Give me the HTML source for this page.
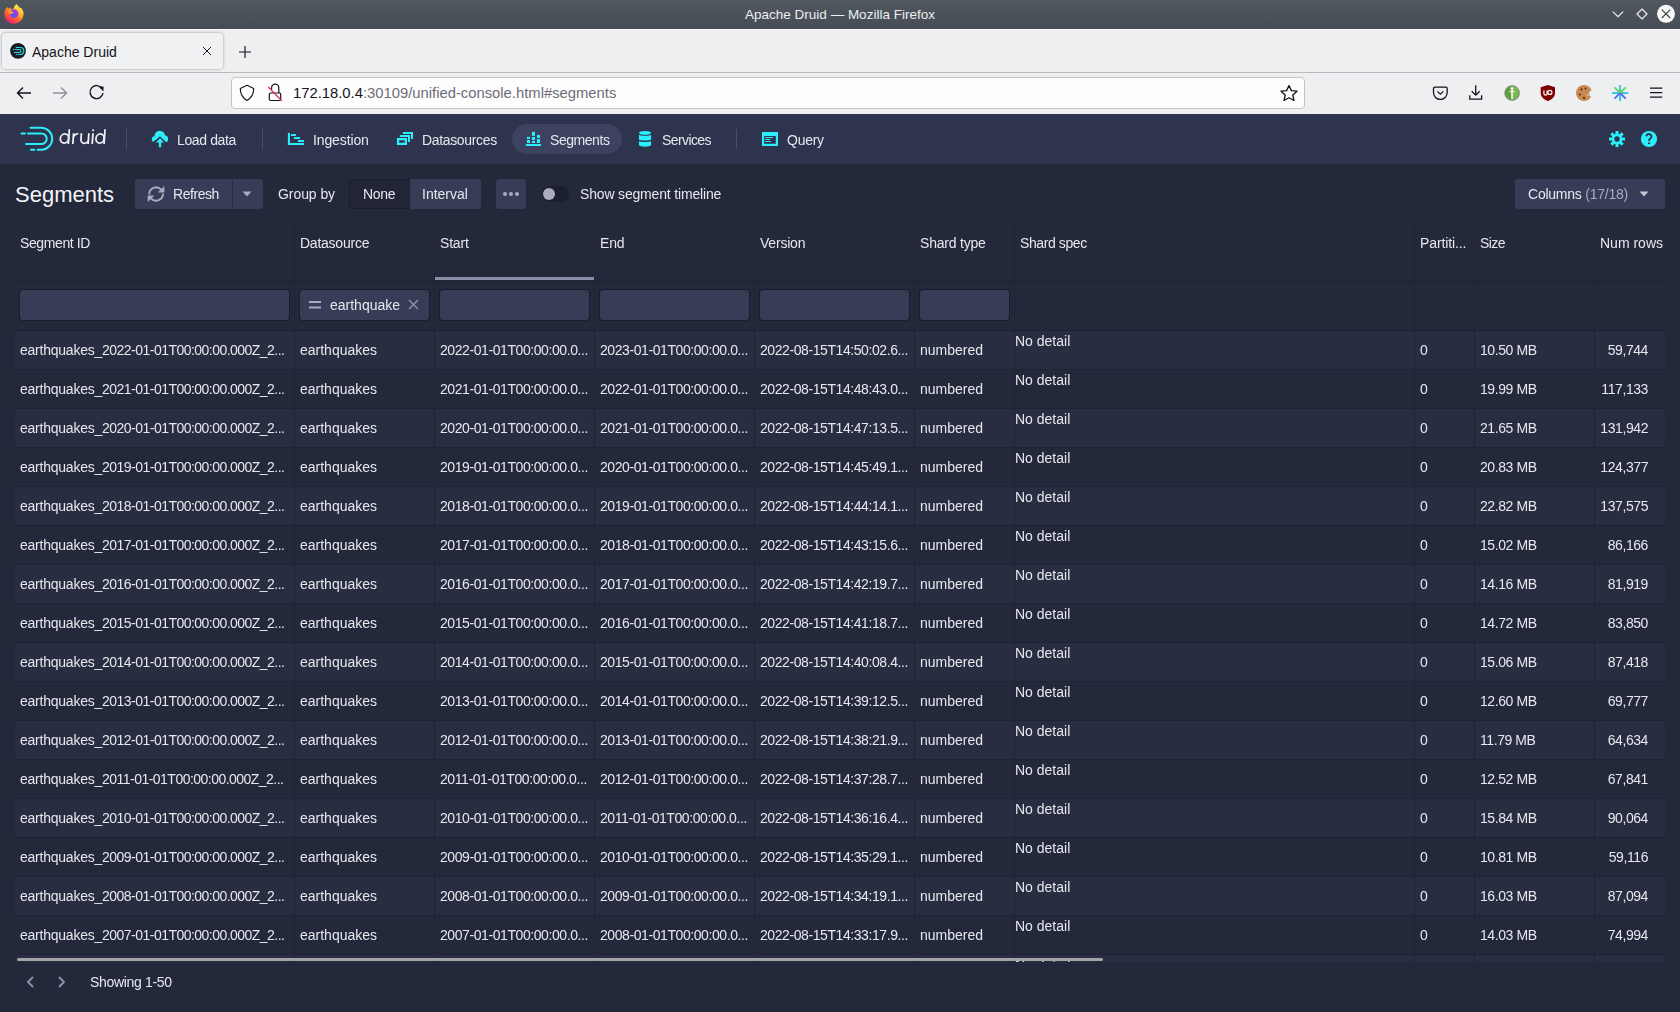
<!DOCTYPE html><html><head><meta charset="utf-8"><title>Apache Druid</title><style>
*{box-sizing:border-box}
html,body{margin:0;padding:0;width:1680px;height:1012px;overflow:hidden;background:#24283b;font-family:"Liberation Sans",sans-serif;}
.a{position:absolute;white-space:nowrap}
.cell,.nt,.t14{will-change:transform}
#title{position:absolute;left:0;top:0;width:1680px;height:29px;background:linear-gradient(#50575f,#474d54);}
#tabs{position:absolute;left:0;top:29px;width:1680px;height:44px;background:#eeeff1;border-top:1px solid #f7f7f8;border-bottom:1px solid #b9b9bd}
#tb{position:absolute;left:0;top:73px;width:1680px;height:41px;background:#eeeff1}
#nav{position:absolute;left:0;top:114px;width:1680px;height:50px;background:#2f344e}
.nt{position:absolute;top:131px;font-size:14px;color:#e6e8ee;line-height:18px}
.sep{position:absolute;top:129px;width:1px;height:20px;background:#4a4f69}
.btn{position:absolute;top:179px;height:30px;background:#383d57;border-radius:3px}
.t14{font-size:14px;color:#e6e8ee;line-height:18px}
.cs{position:absolute;top:224px;width:1px;height:738px;background:#202336}
.rs{position:absolute;left:15px;width:1650px;height:1px;background:#202336}
.cell{position:absolute;font-size:14px;color:#e6e8ee;line-height:18px;white-space:nowrap}
.num{letter-spacing:-0.42px}
.inp{position:absolute;top:290px;height:30px;background:#383d57;border-radius:3px;box-shadow:0 0 0 1px rgba(20,22,36,0.6)}
</style></head><body>
<div id="title"></div>
<div class="a" style="left:0;top:7px;width:1680px;text-align:center;font-size:13.5px;line-height:16px;color:#eceef0">Apache Druid — Mozilla Firefox</div>
<svg class="a" style="left:0;top:0" width="30" height="28" viewBox="0 0 30 28">
<defs><linearGradient id="ffg" x1="0.85" y1="0.05" x2="0.25" y2="0.95"><stop offset="0" stop-color="#fff44f"/><stop offset="0.35" stop-color="#ffbd2e"/><stop offset="0.6" stop-color="#ff6d2e"/><stop offset="0.85" stop-color="#ff3a4a"/><stop offset="1" stop-color="#e31587"/></linearGradient>
<radialGradient id="ffp" cx="0.35" cy="0.75" r="0.8"><stop offset="0" stop-color="#5b5be0"/><stop offset="0.6" stop-color="#8f3ef0"/><stop offset="1" stop-color="#b833e1"/></radialGradient></defs>
<path d="M7.3 7.0 L8.6 8.8 L10.4 7.6 L11.2 9.4 L13.7 8.6 L14.2 6.2 L16.5 3.9 L19.5 7.6 L21.6 8.3 A9.65 9.65 0 1 1 7.3 7.0 Z" fill="url(#ffg)"/>
<circle cx="14" cy="13.6" r="4.4" fill="url(#ffp)"/>
<path d="M7 12.2 L10 10 L13.8 12.4 L10.4 14.2 Z" fill="#ff9d1e"/></svg>
<svg class="a" style="left:1600px;top:0" width="80" height="29" viewBox="0 0 80 29">
<path d="M12.8 11.6 L18 16.6 L23.2 11.6" stroke="#f0f0f0" stroke-width="1.2" fill="none"/>
<path d="M42 9 L47 14 L42 19 L37 14 Z" stroke="#f0f0f0" stroke-width="1.2" fill="none"/>
<circle cx="66" cy="13.8" r="9" fill="#f7f7f7"/><path d="M61.8 9.6 L70.2 18 M70.2 9.6 L61.8 18" stroke="#3a3f45" stroke-width="1.1"/></svg>
<div id="tabs"></div>
<div class="a" style="left:2px;top:33px;width:221px;height:36px;background:#f0f1f3;border-radius:4px;box-shadow:0 0 2px 1px rgba(0,0,0,0.18)"></div>
<svg class="a" style="left:6px;top:40px" width="24" height="22" viewBox="6 40 24 22"><circle cx="18" cy="50.8" r="8.5" fill="#fbfbfc"/><circle cx="18" cy="50.8" r="7.9" fill="#1a1b24"/>
<g stroke="#29dbe8" stroke-width="1.2" fill="none" stroke-linecap="round"><path d="M16.2 47.5 H20.3 A3.5 3.5 0 0 1 20.3 54.5 H18.3"/><path d="M15.2 49.5 H19.4 A1.5 1.5 0 0 1 19.4 52.5 H14.2"/></g>
<circle cx="13.4" cy="49.5" r="0.65" fill="#29dbe8"/><circle cx="16.4" cy="54.5" r="0.65" fill="#29dbe8"/></svg>
<div class="a" style="left:32px;top:43px;font-size:14px;line-height:18px;color:#15141a">Apache Druid</div>
<svg class="a" style="left:202px;top:46px" width="10" height="10" viewBox="0 0 10 10"><path d="M1 1 L9 9 M9 1 L1 9" stroke="#15141a" stroke-width="1.0"/></svg>
<svg class="a" style="left:238px;top:45px" width="14" height="14" viewBox="0 0 14 14"><path d="M7 1 V13 M1 7 H13" stroke="#15141a" stroke-width="1.15"/></svg>
<div id="tb"></div>
<svg class="a" style="left:14px;top:84px" width="96" height="18" viewBox="0 0 96 18">
<path d="M17 9 H4 M9 3.5 L3.5 9 L9 14.5" stroke="#15141a" stroke-width="1.4" fill="none"/>
<path d="M39 9 H52 M47 3.5 L52.5 9 L47 14.5" stroke="#8f8f9d" stroke-width="1.4" fill="none"/>
<path d="M88 4.5 A6.5 6.5 0 1 0 89 9" stroke="#15141a" stroke-width="1.4" fill="none"/><path d="M84.5 2.5 L89.5 2.5 L89.5 7.5 Z" fill="#15141a"/>
</svg>
<div class="a" style="left:231px;top:77px;width:1074px;height:32px;background:#fdfdfe;border:1px solid #c3c3c7;border-radius:4px"></div>
<svg class="a" style="left:228px;top:74px" width="60" height="38" viewBox="228 74 60 38">
<path d="M247 85.2 L253.7 88.4 C253.8 94 251.5 97.7 247 100.4 C242.5 97.7 240.2 94 240.3 88.4 Z" stroke="#15141a" stroke-width="1.15" fill="none" stroke-linejoin="round"/>
<path d="M271.6 89.5 V87.8 A3.6 3.6 0 0 1 278.8 87.8 V93" stroke="#15141a" stroke-width="1.2" fill="none"/><rect x="269.3" y="93" width="11.4" height="7.5" rx="1.5" stroke="#15141a" stroke-width="1.2" fill="none"/>
<path d="M268.2 86.9 L281.8 100.9" stroke="#e3164e" stroke-width="1.3"/></svg>
<div class="a" style="left:293px;top:84px;font-size:14.8px;line-height:18px;color:#15141a">172.18.0.4<span style="color:#6d6d78">:30109/unified-console.html#segments</span></div>
<svg class="a" style="left:1279px;top:84px" width="20" height="18" viewBox="0 0 20 18"><path d="M10 1.5 L12.4 6.6 L18 7.2 L13.8 11 L15 16.5 L10 13.7 L5 16.5 L6.2 11 L2 7.2 L7.6 6.6 Z" stroke="#15141a" stroke-width="1.3" fill="none" stroke-linejoin="round"/></svg>
<svg class="a" style="left:1420px;top:78px" width="260" height="30" viewBox="1420 78 260 30">
<path d="M1435 87.2 H1445.8 Q1447.2 87.2 1447.2 88.6 V92.6 A6.85 6.85 0 0 1 1433.5 92.6 V88.6 Q1433.5 87.2 1435 87.2 Z" stroke="#15141a" stroke-width="1.3" fill="none"/><path d="M1437.4 91.4 L1440.35 94.2 L1443.3 91.4" stroke="#15141a" stroke-width="1.3" fill="none"/>
<path d="M1475.7 85.3 V95 M1471.7 91.2 L1475.7 95.2 L1479.7 91.2 M1469.8 95.3 V99.1 H1481.6 V95.3" stroke="#15141a" stroke-width="1.3" fill="none"/>
<circle cx="1512.1" cy="93" r="7.5" fill="#5e9f3c" stroke="#9a9a9a" stroke-width="0.8"/><path d="M1512.1 86.5 A6.5 6.5 0 0 1 1512.1 99.5 Z" fill="#7dba52"/>
<path d="M1512 90.5 V99" stroke="#f6f6f6" stroke-width="1.7"/><circle cx="1512" cy="88.6" r="1.5" fill="#f6f6f6"/><path d="M1509.5 92 L1512 90.8 L1514.5 92" stroke="#f6f6f6" stroke-width="1.1" fill="none"/>
<path d="M1547.85 85 L1555 87.3 V93 C1555 97 1551.6 99.6 1547.85 101 C1544.1 99.6 1540.7 97 1540.7 93 V87.3 Z" fill="#800000"/>
<path d="M1543.9 90.6 V93.6 A1.6 1.6 0 0 0 1547.1 93.6 V90.6" stroke="#fff" stroke-width="1.2" fill="none"/><circle cx="1549.9" cy="92.4" r="2" stroke="#fff" stroke-width="1.2" fill="none"/>
<circle cx="1584" cy="93" r="8" fill="#c98a52"/><circle cx="1592.3" cy="93.6" r="3.2" fill="#eeeff1"/><circle cx="1581.5" cy="89.5" r="1.1" fill="#4b2a12"/><circle cx="1585.5" cy="88.5" r="0.9" fill="#4b2a12"/><circle cx="1579.8" cy="94.5" r="1" fill="#4b2a12"/><circle cx="1584" cy="97.8" r="1.1" fill="#4b2a12"/><circle cx="1587.8" cy="95" r="0.8" fill="#f4e4d4"/>
<path d="M1620.1 85 V101" stroke="#3ac6e6" stroke-width="2"/><path d="M1612 93 H1628.2" stroke="#3ac6e6" stroke-width="2"/>
<path d="M1614.5 87.4 L1620.1 93 M1625.7 87.4 L1620.1 93" stroke="#6fd85a" stroke-width="2"/><path d="M1620.1 93 L1625.7 98.6 M1620.1 93 L1614.5 98.6" stroke="#5b72ee" stroke-width="2"/>
<path d="M1650 88.1 H1662.3 M1650 92.6 H1662.3 M1650 97.1 H1662.3" stroke="#15141a" stroke-width="1.4"/>
</svg>
<div id="nav"></div>
<svg class="a" style="left:15px;top:120px" width="45" height="36" viewBox="15 120 45 36">
<g stroke="#2ceefb" stroke-width="2" fill="none" stroke-linecap="round">
<path d="M30.5 127.8 H41.2 A11 11 0 0 1 41.2 149.8 H37.5"/>
<path d="M28 133.4 H41.4 A5.35 5.35 0 0 1 41.4 144.1 H26"/>
<path d="M21.5 133.4 H25"/><path d="M31 149.7 H34.3"/></g></svg>
<svg class="a" style="left:55px;top:124px" width="56" height="24" viewBox="55 124 56 24">
<g stroke="#f1f2f6" stroke-width="1.75" fill="none" transform="translate(0 144) skewX(-4.2) translate(0 -144)">
<ellipse cx="64.1" cy="138.5" rx="4.15" ry="4.6"/><path d="M68.3 129.2 V144"/>
<path d="M72.8 133.2 V144 M72.8 137.6 Q73.6 133.8 77.6 133.6"/>
<path d="M80.6 133.2 V139.6 A3.75 3.75 0 0 0 88.1 139.6 M88.1 133.2 V144"/>
<path d="M92.2 133.2 V144"/>
<ellipse cx="99.6" cy="138.5" rx="4.05" ry="4.6"/><path d="M104 129.2 V144"/></g>
<circle cx="93.1" cy="130.2" r="1.05" fill="#f1f2f6"/></svg>
<div class="sep" style="left:126px"></div>
<div class="sep" style="left:262px"></div>
<div class="sep" style="left:736px"></div>
<div class="a" style="left:512px;top:124px;width:110px;height:30px;border-radius:15px;background:#3d4261"></div>
<svg class="a" style="left:150px;top:129px" width="20" height="20" viewBox="0 0 20 20">
<defs><clipPath id="cc"><polygon points="0,0 20,0 20,13.4 16.6,13.4 10,7.1 2.4,13.4 0,13.4"/></clipPath></defs>
<g fill="#2ceefb" clip-path="url(#cc)"><circle cx="9.8" cy="7" r="5.3"/><circle cx="4.8" cy="10.3" r="3"/><circle cx="14.3" cy="10" r="3.8"/><rect x="4.8" y="7" width="9.5" height="7"/></g>
<path d="M10 9.3 L5.9 13.6 L14.1 13.6 Z" fill="#2ceefb"/><rect x="8.8" y="12.5" width="2.4" height="5.7" fill="#2ceefb"/></svg>
<svg class="a" style="left:284px;top:128px" width="24" height="22" viewBox="0 0 24 22" fill="#2ceefb">
<rect x="3.9" y="4.9" width="2.1" height="12.1"/><rect x="3.9" y="15" width="16.1" height="2"/><rect x="7" y="6" width="5" height="2" rx="0.6"/><rect x="9.9" y="9" width="6.2" height="2" rx="0.6"/><rect x="13.9" y="12" width="6.1" height="2" rx="0.6"/></svg>
<svg class="a" style="left:393px;top:128px" width="24" height="22" viewBox="0 0 24 22" fill="#2ceefb">
<path fill-rule="evenodd" d="M3.9 9.9 H14 V17 H3.9 Z M6.2 12.3 V14.8 H11.7 V12.3 Z"/><path d="M6.8 7 H17 V13.9 H15 V8.9 H6.8 Z"/><path d="M9.9 3.9 H20 V11 H18 V5.9 H9.9 Z"/></svg>
<svg class="a" style="left:522px;top:128px" width="24" height="22" viewBox="0 0 24 22" fill="#2ceefb">
<rect x="3.9" y="16" width="15.1" height="2"/><rect x="4.9" y="8.9" width="3.1" height="2"/><rect x="4.9" y="12" width="3.1" height="3"/>
<rect x="9.9" y="3.9" width="3.1" height="3.9"/><rect x="9.9" y="9" width="3.1" height="3"/><rect x="9.9" y="12.9" width="3.1" height="2.1"/>
<rect x="14.9" y="7" width="3.1" height="2.9"/><rect x="14.9" y="11" width="3.1" height="4"/></svg>
<svg class="a" style="left:633px;top:126px" width="24" height="24" viewBox="0 0 24 24" fill="#2ceefb">
<ellipse cx="12" cy="6.8" rx="6.1" ry="1.9"/><path d="M5.9 8.8 C7 10.2 17 10.2 18.1 8.8 V13.5 C17 14.9 7 14.9 5.9 13.5 Z"/><path d="M5.9 14.9 C7 16.3 17 16.3 18.1 14.9 V19 C17 21.2 7 21.2 5.9 19 Z"/></svg>
<svg class="a" style="left:757px;top:128px" width="24" height="22" viewBox="0 0 24 22" fill="#2ceefb">
<path fill-rule="evenodd" d="M5 4 H21 V18 H5 Z M7.1 8 V15.8 H18.8 V8 Z"/><rect x="8" y="8.9" width="8.1" height="1.2" rx="0.6"/><rect x="8" y="11" width="5.1" height="1.1" rx="0.55"/><rect x="8" y="12.9" width="6.1" height="1.2" rx="0.6"/></svg>
<div class="nt" style="left:177px;letter-spacing:-0.37px">Load data</div>
<div class="nt" style="left:313px;letter-spacing:-0.12px">Ingestion</div>
<div class="nt" style="left:422px;letter-spacing:-0.34px">Datasources</div>
<div class="nt" style="left:550px;letter-spacing:-0.45px">Segments</div>
<div class="nt" style="left:662px;letter-spacing:-0.6px">Services</div>
<div class="nt" style="left:787px;letter-spacing:-0.25px">Query</div>
<svg class="a" style="left:1604px;top:127px" width="58" height="24" viewBox="1604 127 58 24">
<g fill="#2ceefb" transform="translate(1617 139)">
<rect x="-1.5" y="-8" width="3" height="16"/><rect x="-1.5" y="-8" width="3" height="16" transform="rotate(45)"/><rect x="-1.5" y="-8" width="3" height="16" transform="rotate(90)"/><rect x="-1.5" y="-8" width="3" height="16" transform="rotate(135)"/>
<circle r="5.3"/></g><circle cx="1617" cy="139" r="2.7" fill="#2f344e"/>
<circle cx="1649" cy="139" r="8.1" fill="#2ceefb"/>
<path d="M1646.3 136.4 A2.6 2.4 0 1 1 1650.6 138.3 C1649.6 139 1649 139.6 1649 141" stroke="#2f344e" stroke-width="1.9" fill="none"/><rect x="1648" y="142.4" width="2" height="1.6" fill="#2f344e"/></svg>
<div class="a" style="left:15px;top:182px;font-size:22px;line-height:26px;color:#f3f4f7">Segments</div>
<div class="btn" style="left:135px;width:128px"></div>
<div class="a" style="left:232px;top:179px;width:1px;height:30px;background:#2a2e44"></div>
<svg class="a" style="left:140px;top:180px" width="30" height="28" viewBox="0 0 30 28">
<g stroke="#a9acbb" stroke-width="1.9" fill="none"><path d="M9.3 14.5 A6.8 6.8 0 0 1 21.2 9.6"/><path d="M22.9 13.5 A6.8 6.8 0 0 1 11 18.4"/></g>
<path d="M24.4 5.9 V12.6 H17.7 Z" fill="#a9acbb"/><path d="M7.7 22.1 V15.4 H14.4 Z" fill="#a9acbb"/></svg>
<div class="a t14" style="left:173px;top:185px;letter-spacing:-0.45px">Refresh</div>
<svg class="a" style="left:242px;top:191px" width="10" height="6" viewBox="0 0 10 6"><path d="M0.5 0.5 H9.5 L5 5.5 Z" fill="#a9acbb"/></svg>
<div class="a t14" style="left:278px;top:185px;letter-spacing:-0.07px">Group by</div>
<div class="a" style="left:349px;top:179px;width:132px;height:30px;border-radius:3px;background:#222538;border:1px solid #1b1e2d"></div>
<div class="a" style="left:410px;top:179px;width:71px;height:30px;border-radius:0 3px 3px 0;background:#383d57"></div>
<div class="a t14" style="left:363px;top:185px;letter-spacing:-0.3px">None</div>
<div class="a t14" style="left:422px;top:185px">Interval</div>
<div class="btn" style="left:496px;width:30px"></div>
<svg class="a" style="left:502px;top:191px" width="18" height="6" viewBox="0 0 18 6"><circle cx="3" cy="3" r="2" fill="#a9acbb"/><circle cx="9" cy="3" r="2" fill="#a9acbb"/><circle cx="15" cy="3" r="2" fill="#a9acbb"/></svg>
<div class="a" style="left:542px;top:186px;width:27px;height:16px;border-radius:8px;background:#1c1f2f"></div>
<div class="a" style="left:543px;top:188px;width:12px;height:12px;border-radius:6px;background:#a9acbb"></div>
<div class="a t14" style="left:580px;top:185px;letter-spacing:-0.17px">Show segment timeline</div>
<div class="btn" style="left:1515px;width:150px"></div>
<div class="a t14" style="left:1528px;top:185px;letter-spacing:-0.23px">Columns <span style="color:#a9acbb">(17/18)</span></div>
<svg class="a" style="left:1639px;top:191px" width="10" height="6" viewBox="0 0 10 6"><path d="M0.5 0.5 H9.5 L5 5.5 Z" fill="#c5c7d2"/></svg>
<div class="a" style="left:15px;top:331px;width:1650px;height:38px;background:#292d41"></div>
<div class="a" style="left:15px;top:409px;width:1650px;height:38px;background:#292d41"></div>
<div class="a" style="left:15px;top:487px;width:1650px;height:38px;background:#292d41"></div>
<div class="a" style="left:15px;top:565px;width:1650px;height:38px;background:#292d41"></div>
<div class="a" style="left:15px;top:643px;width:1650px;height:38px;background:#292d41"></div>
<div class="a" style="left:15px;top:721px;width:1650px;height:38px;background:#292d41"></div>
<div class="a" style="left:15px;top:799px;width:1650px;height:38px;background:#292d41"></div>
<div class="a" style="left:15px;top:877px;width:1650px;height:38px;background:#292d41"></div>
<div class="a" style="left:15px;top:955px;width:1650px;height:7px;background:#292d41"></div>
<div class="rs" style="top:280px"></div>
<div class="rs" style="top:330px"></div>
<div class="rs" style="top:369px"></div>
<div class="rs" style="top:408px"></div>
<div class="rs" style="top:447px"></div>
<div class="rs" style="top:486px"></div>
<div class="rs" style="top:525px"></div>
<div class="rs" style="top:564px"></div>
<div class="rs" style="top:603px"></div>
<div class="rs" style="top:642px"></div>
<div class="rs" style="top:681px"></div>
<div class="rs" style="top:720px"></div>
<div class="rs" style="top:759px"></div>
<div class="rs" style="top:798px"></div>
<div class="rs" style="top:837px"></div>
<div class="rs" style="top:876px"></div>
<div class="rs" style="top:915px"></div>
<div class="rs" style="top:954px"></div>
<div class="a" style="left:435px;top:277px;width:159px;height:3px;background:#8a8ea6"></div>
<div class="cs" style="left:294px"></div>
<div class="cs" style="left:434px"></div>
<div class="cs" style="left:594px"></div>
<div class="cs" style="left:754px"></div>
<div class="cs" style="left:914px"></div>
<div class="cs" style="left:1014px"></div>
<div class="cs" style="left:1414px"></div>
<div class="cs" style="left:1474px"></div>
<div class="cs" style="left:1594px"></div>
<div class="cell" style="left:20px;top:234px;letter-spacing:-0.39px">Segment ID</div>
<div class="cell" style="left:300px;top:234px;letter-spacing:-0.24px">Datasource</div>
<div class="cell" style="left:440px;top:234px;letter-spacing:-0.2px">Start</div>
<div class="cell" style="left:600px;top:234px;letter-spacing:-0.2px">End</div>
<div class="cell" style="left:760px;top:234px;letter-spacing:-0.2px">Version</div>
<div class="cell" style="left:920px;top:234px;letter-spacing:-0.2px">Shard type</div>
<div class="cell" style="left:1020px;top:234px;letter-spacing:-0.4px">Shard spec</div>
<div class="cell" style="left:1420px;top:234px;letter-spacing:-0.12px">Partiti...</div>
<div class="cell" style="left:1480px;top:234px;letter-spacing:-0.6px">Size</div>
<div class="cell" style="left:1600px;top:234px;letter-spacing:0px">Num rows</div>
<div class="inp" style="left:20px;width:269px"></div>
<div class="inp" style="left:300px;width:129px"></div>
<div class="inp" style="left:440px;width:149px"></div>
<div class="inp" style="left:600px;width:149px"></div>
<div class="inp" style="left:760px;width:149px"></div>
<div class="inp" style="left:920px;width:89px"></div>
<svg class="a" style="left:309px;top:301px" width="12" height="8" viewBox="0 0 12 8"><path d="M0 1 H12 M0 6.5 H12" stroke="#a9acbb" stroke-width="1.8"/></svg>
<div class="cell" style="left:330px;top:296px">earthquake</div>
<svg class="a" style="left:408px;top:299px" width="11" height="11" viewBox="0 0 11 11"><path d="M1 1 L10 10 M10 1 L1 10" stroke="#8d90a2" stroke-width="1.5"/></svg>
<div class="a" style="left:0;top:331px;width:1665px;height:631px;overflow:hidden">
<div class="cell" style="left:20px;top:10px"><span style="letter-spacing:-0.23px">earthquakes_</span><span style="letter-spacing:-0.53px">2022-01-01T00:00:00.000Z_2...</span></div>
<div class="cell" style="left:300px;top:10px">earthquakes</div>
<div class="cell num" style="left:440px;top:10px">2022-01-01T00:00:00.0...</div>
<div class="cell num" style="left:600px;top:10px">2023-01-01T00:00:00.0...</div>
<div class="cell num" style="left:760px;top:10px">2022-08-15T14:50:02.6...</div>
<div class="cell" style="left:920px;top:10px">numbered</div>
<div class="cell" style="left:1015px;top:1px">No detail</div>
<div class="cell" style="left:1420px;top:10px">0</div>
<div class="cell num" style="left:1480px;top:10px">10.50 MB</div>
<div class="cell num" style="left:1500px;width:148px;text-align:right;top:10px">59,744</div>
<div class="cell" style="left:20px;top:49px"><span style="letter-spacing:-0.23px">earthquakes_</span><span style="letter-spacing:-0.53px">2021-01-01T00:00:00.000Z_2...</span></div>
<div class="cell" style="left:300px;top:49px">earthquakes</div>
<div class="cell num" style="left:440px;top:49px">2021-01-01T00:00:00.0...</div>
<div class="cell num" style="left:600px;top:49px">2022-01-01T00:00:00.0...</div>
<div class="cell num" style="left:760px;top:49px">2022-08-15T14:48:43.0...</div>
<div class="cell" style="left:920px;top:49px">numbered</div>
<div class="cell" style="left:1015px;top:40px">No detail</div>
<div class="cell" style="left:1420px;top:49px">0</div>
<div class="cell num" style="left:1480px;top:49px">19.99 MB</div>
<div class="cell num" style="left:1500px;width:148px;text-align:right;top:49px">117,133</div>
<div class="cell" style="left:20px;top:88px"><span style="letter-spacing:-0.23px">earthquakes_</span><span style="letter-spacing:-0.53px">2020-01-01T00:00:00.000Z_2...</span></div>
<div class="cell" style="left:300px;top:88px">earthquakes</div>
<div class="cell num" style="left:440px;top:88px">2020-01-01T00:00:00.0...</div>
<div class="cell num" style="left:600px;top:88px">2021-01-01T00:00:00.0...</div>
<div class="cell num" style="left:760px;top:88px">2022-08-15T14:47:13.5...</div>
<div class="cell" style="left:920px;top:88px">numbered</div>
<div class="cell" style="left:1015px;top:79px">No detail</div>
<div class="cell" style="left:1420px;top:88px">0</div>
<div class="cell num" style="left:1480px;top:88px">21.65 MB</div>
<div class="cell num" style="left:1500px;width:148px;text-align:right;top:88px">131,942</div>
<div class="cell" style="left:20px;top:127px"><span style="letter-spacing:-0.23px">earthquakes_</span><span style="letter-spacing:-0.53px">2019-01-01T00:00:00.000Z_2...</span></div>
<div class="cell" style="left:300px;top:127px">earthquakes</div>
<div class="cell num" style="left:440px;top:127px">2019-01-01T00:00:00.0...</div>
<div class="cell num" style="left:600px;top:127px">2020-01-01T00:00:00.0...</div>
<div class="cell num" style="left:760px;top:127px">2022-08-15T14:45:49.1...</div>
<div class="cell" style="left:920px;top:127px">numbered</div>
<div class="cell" style="left:1015px;top:118px">No detail</div>
<div class="cell" style="left:1420px;top:127px">0</div>
<div class="cell num" style="left:1480px;top:127px">20.83 MB</div>
<div class="cell num" style="left:1500px;width:148px;text-align:right;top:127px">124,377</div>
<div class="cell" style="left:20px;top:166px"><span style="letter-spacing:-0.23px">earthquakes_</span><span style="letter-spacing:-0.53px">2018-01-01T00:00:00.000Z_2...</span></div>
<div class="cell" style="left:300px;top:166px">earthquakes</div>
<div class="cell num" style="left:440px;top:166px">2018-01-01T00:00:00.0...</div>
<div class="cell num" style="left:600px;top:166px">2019-01-01T00:00:00.0...</div>
<div class="cell num" style="left:760px;top:166px">2022-08-15T14:44:14.1...</div>
<div class="cell" style="left:920px;top:166px">numbered</div>
<div class="cell" style="left:1015px;top:157px">No detail</div>
<div class="cell" style="left:1420px;top:166px">0</div>
<div class="cell num" style="left:1480px;top:166px">22.82 MB</div>
<div class="cell num" style="left:1500px;width:148px;text-align:right;top:166px">137,575</div>
<div class="cell" style="left:20px;top:205px"><span style="letter-spacing:-0.23px">earthquakes_</span><span style="letter-spacing:-0.53px">2017-01-01T00:00:00.000Z_2...</span></div>
<div class="cell" style="left:300px;top:205px">earthquakes</div>
<div class="cell num" style="left:440px;top:205px">2017-01-01T00:00:00.0...</div>
<div class="cell num" style="left:600px;top:205px">2018-01-01T00:00:00.0...</div>
<div class="cell num" style="left:760px;top:205px">2022-08-15T14:43:15.6...</div>
<div class="cell" style="left:920px;top:205px">numbered</div>
<div class="cell" style="left:1015px;top:196px">No detail</div>
<div class="cell" style="left:1420px;top:205px">0</div>
<div class="cell num" style="left:1480px;top:205px">15.02 MB</div>
<div class="cell num" style="left:1500px;width:148px;text-align:right;top:205px">86,166</div>
<div class="cell" style="left:20px;top:244px"><span style="letter-spacing:-0.23px">earthquakes_</span><span style="letter-spacing:-0.53px">2016-01-01T00:00:00.000Z_2...</span></div>
<div class="cell" style="left:300px;top:244px">earthquakes</div>
<div class="cell num" style="left:440px;top:244px">2016-01-01T00:00:00.0...</div>
<div class="cell num" style="left:600px;top:244px">2017-01-01T00:00:00.0...</div>
<div class="cell num" style="left:760px;top:244px">2022-08-15T14:42:19.7...</div>
<div class="cell" style="left:920px;top:244px">numbered</div>
<div class="cell" style="left:1015px;top:235px">No detail</div>
<div class="cell" style="left:1420px;top:244px">0</div>
<div class="cell num" style="left:1480px;top:244px">14.16 MB</div>
<div class="cell num" style="left:1500px;width:148px;text-align:right;top:244px">81,919</div>
<div class="cell" style="left:20px;top:283px"><span style="letter-spacing:-0.23px">earthquakes_</span><span style="letter-spacing:-0.53px">2015-01-01T00:00:00.000Z_2...</span></div>
<div class="cell" style="left:300px;top:283px">earthquakes</div>
<div class="cell num" style="left:440px;top:283px">2015-01-01T00:00:00.0...</div>
<div class="cell num" style="left:600px;top:283px">2016-01-01T00:00:00.0...</div>
<div class="cell num" style="left:760px;top:283px">2022-08-15T14:41:18.7...</div>
<div class="cell" style="left:920px;top:283px">numbered</div>
<div class="cell" style="left:1015px;top:274px">No detail</div>
<div class="cell" style="left:1420px;top:283px">0</div>
<div class="cell num" style="left:1480px;top:283px">14.72 MB</div>
<div class="cell num" style="left:1500px;width:148px;text-align:right;top:283px">83,850</div>
<div class="cell" style="left:20px;top:322px"><span style="letter-spacing:-0.23px">earthquakes_</span><span style="letter-spacing:-0.53px">2014-01-01T00:00:00.000Z_2...</span></div>
<div class="cell" style="left:300px;top:322px">earthquakes</div>
<div class="cell num" style="left:440px;top:322px">2014-01-01T00:00:00.0...</div>
<div class="cell num" style="left:600px;top:322px">2015-01-01T00:00:00.0...</div>
<div class="cell num" style="left:760px;top:322px">2022-08-15T14:40:08.4...</div>
<div class="cell" style="left:920px;top:322px">numbered</div>
<div class="cell" style="left:1015px;top:313px">No detail</div>
<div class="cell" style="left:1420px;top:322px">0</div>
<div class="cell num" style="left:1480px;top:322px">15.06 MB</div>
<div class="cell num" style="left:1500px;width:148px;text-align:right;top:322px">87,418</div>
<div class="cell" style="left:20px;top:361px"><span style="letter-spacing:-0.23px">earthquakes_</span><span style="letter-spacing:-0.53px">2013-01-01T00:00:00.000Z_2...</span></div>
<div class="cell" style="left:300px;top:361px">earthquakes</div>
<div class="cell num" style="left:440px;top:361px">2013-01-01T00:00:00.0...</div>
<div class="cell num" style="left:600px;top:361px">2014-01-01T00:00:00.0...</div>
<div class="cell num" style="left:760px;top:361px">2022-08-15T14:39:12.5...</div>
<div class="cell" style="left:920px;top:361px">numbered</div>
<div class="cell" style="left:1015px;top:352px">No detail</div>
<div class="cell" style="left:1420px;top:361px">0</div>
<div class="cell num" style="left:1480px;top:361px">12.60 MB</div>
<div class="cell num" style="left:1500px;width:148px;text-align:right;top:361px">69,777</div>
<div class="cell" style="left:20px;top:400px"><span style="letter-spacing:-0.23px">earthquakes_</span><span style="letter-spacing:-0.53px">2012-01-01T00:00:00.000Z_2...</span></div>
<div class="cell" style="left:300px;top:400px">earthquakes</div>
<div class="cell num" style="left:440px;top:400px">2012-01-01T00:00:00.0...</div>
<div class="cell num" style="left:600px;top:400px">2013-01-01T00:00:00.0...</div>
<div class="cell num" style="left:760px;top:400px">2022-08-15T14:38:21.9...</div>
<div class="cell" style="left:920px;top:400px">numbered</div>
<div class="cell" style="left:1015px;top:391px">No detail</div>
<div class="cell" style="left:1420px;top:400px">0</div>
<div class="cell num" style="left:1480px;top:400px">11.79 MB</div>
<div class="cell num" style="left:1500px;width:148px;text-align:right;top:400px">64,634</div>
<div class="cell" style="left:20px;top:439px"><span style="letter-spacing:-0.23px">earthquakes_</span><span style="letter-spacing:-0.53px">2011-01-01T00:00:00.000Z_2...</span></div>
<div class="cell" style="left:300px;top:439px">earthquakes</div>
<div class="cell num" style="left:440px;top:439px">2011-01-01T00:00:00.0...</div>
<div class="cell num" style="left:600px;top:439px">2012-01-01T00:00:00.0...</div>
<div class="cell num" style="left:760px;top:439px">2022-08-15T14:37:28.7...</div>
<div class="cell" style="left:920px;top:439px">numbered</div>
<div class="cell" style="left:1015px;top:430px">No detail</div>
<div class="cell" style="left:1420px;top:439px">0</div>
<div class="cell num" style="left:1480px;top:439px">12.52 MB</div>
<div class="cell num" style="left:1500px;width:148px;text-align:right;top:439px">67,841</div>
<div class="cell" style="left:20px;top:478px"><span style="letter-spacing:-0.23px">earthquakes_</span><span style="letter-spacing:-0.53px">2010-01-01T00:00:00.000Z_2...</span></div>
<div class="cell" style="left:300px;top:478px">earthquakes</div>
<div class="cell num" style="left:440px;top:478px">2010-01-01T00:00:00.0...</div>
<div class="cell num" style="left:600px;top:478px">2011-01-01T00:00:00.0...</div>
<div class="cell num" style="left:760px;top:478px">2022-08-15T14:36:16.4...</div>
<div class="cell" style="left:920px;top:478px">numbered</div>
<div class="cell" style="left:1015px;top:469px">No detail</div>
<div class="cell" style="left:1420px;top:478px">0</div>
<div class="cell num" style="left:1480px;top:478px">15.84 MB</div>
<div class="cell num" style="left:1500px;width:148px;text-align:right;top:478px">90,064</div>
<div class="cell" style="left:20px;top:517px"><span style="letter-spacing:-0.23px">earthquakes_</span><span style="letter-spacing:-0.53px">2009-01-01T00:00:00.000Z_2...</span></div>
<div class="cell" style="left:300px;top:517px">earthquakes</div>
<div class="cell num" style="left:440px;top:517px">2009-01-01T00:00:00.0...</div>
<div class="cell num" style="left:600px;top:517px">2010-01-01T00:00:00.0...</div>
<div class="cell num" style="left:760px;top:517px">2022-08-15T14:35:29.1...</div>
<div class="cell" style="left:920px;top:517px">numbered</div>
<div class="cell" style="left:1015px;top:508px">No detail</div>
<div class="cell" style="left:1420px;top:517px">0</div>
<div class="cell num" style="left:1480px;top:517px">10.81 MB</div>
<div class="cell num" style="left:1500px;width:148px;text-align:right;top:517px">59,116</div>
<div class="cell" style="left:20px;top:556px"><span style="letter-spacing:-0.23px">earthquakes_</span><span style="letter-spacing:-0.53px">2008-01-01T00:00:00.000Z_2...</span></div>
<div class="cell" style="left:300px;top:556px">earthquakes</div>
<div class="cell num" style="left:440px;top:556px">2008-01-01T00:00:00.0...</div>
<div class="cell num" style="left:600px;top:556px">2009-01-01T00:00:00.0...</div>
<div class="cell num" style="left:760px;top:556px">2022-08-15T14:34:19.1...</div>
<div class="cell" style="left:920px;top:556px">numbered</div>
<div class="cell" style="left:1015px;top:547px">No detail</div>
<div class="cell" style="left:1420px;top:556px">0</div>
<div class="cell num" style="left:1480px;top:556px">16.03 MB</div>
<div class="cell num" style="left:1500px;width:148px;text-align:right;top:556px">87,094</div>
<div class="cell" style="left:20px;top:595px"><span style="letter-spacing:-0.23px">earthquakes_</span><span style="letter-spacing:-0.53px">2007-01-01T00:00:00.000Z_2...</span></div>
<div class="cell" style="left:300px;top:595px">earthquakes</div>
<div class="cell num" style="left:440px;top:595px">2007-01-01T00:00:00.0...</div>
<div class="cell num" style="left:600px;top:595px">2008-01-01T00:00:00.0...</div>
<div class="cell num" style="left:760px;top:595px">2022-08-15T14:33:17.9...</div>
<div class="cell" style="left:920px;top:595px">numbered</div>
<div class="cell" style="left:1015px;top:586px">No detail</div>
<div class="cell" style="left:1420px;top:595px">0</div>
<div class="cell num" style="left:1480px;top:595px">14.03 MB</div>
<div class="cell num" style="left:1500px;width:148px;text-align:right;top:595px">74,994</div>
<div class="cell" style="left:20px;top:634px"><span style="letter-spacing:-0.23px">earthquakes_</span><span style="letter-spacing:-0.53px">2006-01-01T00:00:00.000Z_2...</span></div>
<div class="cell" style="left:300px;top:634px">earthquakes</div>
<div class="cell num" style="left:440px;top:634px">2006-01-01T00:00:00.0...</div>
<div class="cell num" style="left:600px;top:634px">2007-01-01T00:00:00.0...</div>
<div class="cell num" style="left:760px;top:634px">2022-08-15T14:32:11.2...</div>
<div class="cell" style="left:920px;top:634px">numbered</div>
<div class="cell" style="left:1015px;top:625px">No detail</div>
<div class="cell" style="left:1420px;top:634px">0</div>
<div class="cell num" style="left:1480px;top:634px">13.00 MB</div>
<div class="cell num" style="left:1500px;width:148px;text-align:right;top:634px">70,000</div>
</div>
<div class="a" style="left:17px;top:958px;width:1086px;height:3px;border-radius:2px;background:#a3a3a3"></div>
<svg class="a" style="left:24px;top:975px" width="44" height="14" viewBox="0 0 44 14"><path d="M9 2 L4 7 L9 12" stroke="#8f94b0" stroke-width="1.8" fill="none"/><path d="M35 2 L40 7 L35 12" stroke="#8f94b0" stroke-width="1.8" fill="none"/></svg>
<div class="a t14" style="left:90px;top:973px;letter-spacing:-0.33px">Showing 1-50</div>
</body></html>
